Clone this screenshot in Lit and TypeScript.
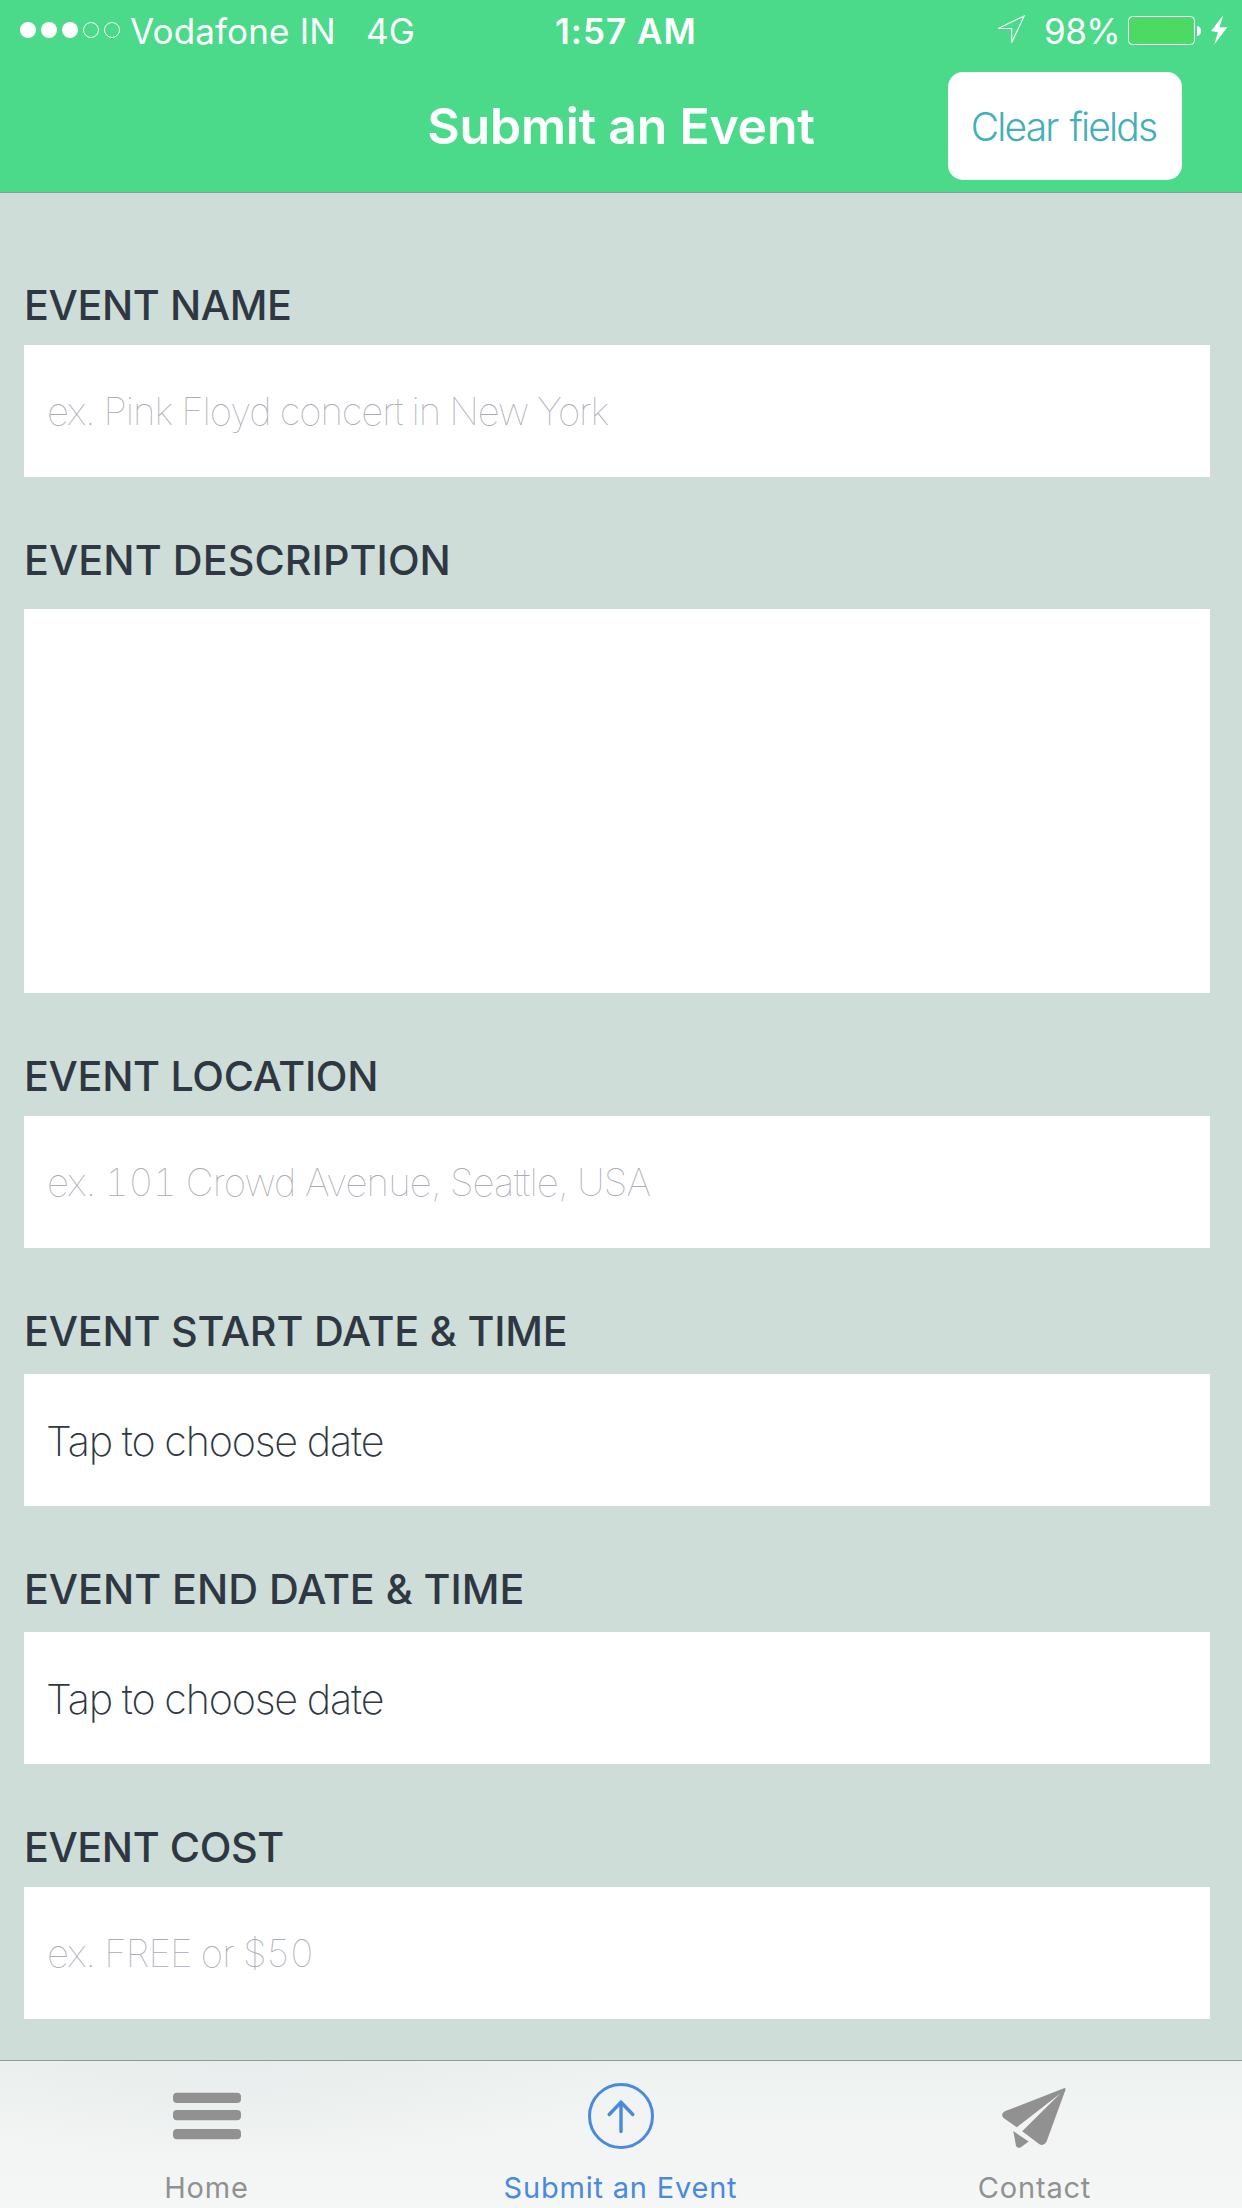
import { LitElement, html, css, svg } from "lit";
import { customElement, property } from "lit/decorators.js";
import { classMap } from "lit/directives/class-map.js";
import { styleMap } from "lit/directives/style-map.js";

type FieldKind = "text" | "area" | "date";

interface Field {
  label: string;
  kind: FieldKind;
  value: string;
  /** Letter spacing in pixels for the label and for the value. */
  labelTracking: number;
  valueTracking: number;
}

interface Tab {
  label: string;
  icon: "menu" | "submit" | "plane";
  active: boolean;
}

const FIELDS: Field[] = [
  { label: "EVENT NAME", kind: "text", value: "ex. Pink Floyd concert in New York", labelTracking: -0.38, valueTracking: -1.12 },
  { label: "EVENT DESCRIPTION", kind: "area", value: "", labelTracking: 0.08, valueTracking: 0 },
  { label: "EVENT LOCATION", kind: "text", value: "ex. 101 Crowd Avenue, Seattle, USA", labelTracking: -0.3, valueTracking: -0.88 },
  { label: "EVENT START DATE & TIME", kind: "date", value: "Tap to choose date", labelTracking: -0.2, valueTracking: -1.2 },
  { label: "EVENT END DATE & TIME", kind: "date", value: "Tap to choose date", labelTracking: -0.03, valueTracking: -1.2 },
  { label: "EVENT COST", kind: "text", value: "ex. FREE or $50", labelTracking: -0.42, valueTracking: -0.97 },
];

const TABS: Tab[] = [
  { label: "Home", icon: "menu", active: false },
  { label: "Submit an Event", icon: "submit", active: true },
  { label: "Contact", icon: "plane", active: false },
];

@customElement("status-bar")
class StatusBar extends LitElement {
  static styles = css`
    :host {
      display: grid;
      grid-template-columns: 110px 236px 189px 441px 48px 84px 1fr;
      align-items: center;
      box-sizing: border-box;
      height: 60px;
      padding: 2px 0 0 20px;
      color: #fff;
      font-size: 35px;
      line-height: 56px;
      white-space: nowrap;
    }
    svg { display: block; margin-top: -2px; }
    .carrier { font-weight: 370; letter-spacing: 0.15px; }
    .time { font-weight: 570; letter-spacing: 1px; }
    .percent { font-weight: 370; letter-spacing: -0.5px; }
  `;
  render() {
    return html`
      <svg width="100" height="60" viewBox="0 0 100 60">
        ${[0, 1, 2, 3, 4].map((i) =>
          i < 3
            ? svg`<circle cx=${8 + i * 21} cy="30" r="8" fill="#fff" />`
            : svg`<circle cx=${8 + i * 21} cy="30" r="7.5" fill="none" stroke="#fff" />`
        )}
      </svg>
      <span class="carrier">Vodafone IN</span>
      <span class="carrier">4G</span>
      <span class="time">1:57 AM</span>
      <svg width="32" height="60" viewBox="0 0 32 60">
        <path d="M28.2 16 L2.2 28.5 H15.7 V42.5 Z" fill="none" stroke="#fff" stroke-width="1.1" />
      </svg>
      <span class="percent">98%</span>
      <svg width="102" height="60" viewBox="0 0 102 60">
        <rect x="0.5" y="16.5" width="66" height="28" rx="4" fill="none" stroke="#fff" />
        <rect x="1.5" y="17.5" width="63.5" height="26" rx="3" fill="#4cd964" />
        <path d="M69 26 C74.4 26 74.4 36 69 36 Z" fill="#fff" />
        <path d="M95.3 15.3 L83 31 L90 32.2 L86.2 44.7 L99.3 27.3 H91.5 Z" fill="#fff" />
      </svg>
    `;
  }
}

@customElement("nav-bar")
class NavBar extends LitElement {
  static styles = css`
    :host {
      display: grid;
      grid-template-columns: 1fr auto 1fr;
      align-items: center;
      height: 132px;
      color: #fff;
    }
    .title {
      margin: 0;
      grid-column: 2;
      font-size: 50px;
      line-height: 60px;
      font-weight: 600;
      letter-spacing: -0.25px;
      white-space: nowrap;
    }
    .clear {
      justify-self: end;
      box-sizing: border-box;
      width: 234px;
      height: 108px;
      margin-right: 60px;
      padding: 2px 3px 0 0;
      border: 0;
      border-radius: 15px;
      background: #fff;
      color: #43b0b8;
      font: 270 39px/50px Inter, "Liberation Sans", sans-serif;
      letter-spacing: -1.85px;
      word-spacing: 3px;
      white-space: nowrap;
    }
  `;
  render() {
    return html`
      <h1 class="title">Submit an Event</h1>
      <button class="clear">Clear fields</button>
    `;
  }
}

@customElement("form-field")
class FormField extends LitElement {
  @property({ attribute: false }) field!: Field;

  static styles = css`
    :host { display: block; }
    .label {
      padding-top: 58px;
      font-size: 41.3px;
      line-height: 50px;
      font-weight: 540;
      color: #2f3842;
      white-space: nowrap;
    }
    .box {
      display: flex;
      align-items: center;
      box-sizing: border-box;
      height: 132px;
      margin-top: 15px;
      padding-left: 23px;
      background: #fff;
      font-size: 38.5px;
      line-height: 50px;
      font-weight: 130;
      font-variant-numeric: tabular-nums;
      color: #acacb5;
      white-space: nowrap;
    }
    .area { height: 384px; margin-top: 24px; }
    .date {
      margin-top: 18px;
      padding: 2px 0 0 22px;
      font-size: 41.3px;
      font-weight: 200;
      color: #2f3842;
    }
  `;
  render() {
    const { label, kind, value, labelTracking, valueTracking } = this.field;
    return html`
      <div class="label" style=${styleMap({ letterSpacing: `${labelTracking}px` })}>${label}</div>
      <div class=${classMap({ box: true, area: kind === "area", date: kind === "date" })}>
        ${value ? html`<span style=${styleMap({ letterSpacing: `${valueTracking}px` })}>${value}</span>` : null}
      </div>
    `;
  }
}

@customElement("tab-bar")
class TabBar extends LitElement {
  static styles = css`
    :host {
      display: grid;
      grid-template-columns: repeat(3, 1fr);
      box-sizing: border-box;
      height: 148px;
      border-top: 1px solid #8d9c96;
      background:
        radial-gradient(ellipse 380px 110px at 240px 0, rgba(229, 233, 234, 0.6), rgba(229, 233, 234, 0)),
        linear-gradient(#edf2f0, #f3f5f4 60%, #f5f7f6);
    }
    .tab {
      display: flex;
      flex-direction: column;
      align-items: center;
      color: #919191;
      font-size: 29px;
      line-height: 36px;
      letter-spacing: 0.8px;
      white-space: nowrap;
    }
    .tab svg { display: block; margin: 17px 0 28px; }
    .tab span { padding-right: 1px; }
    .active { color: #4a89dc; }
  `;
  private icon(name: Tab["icon"]) {
    if (name === "menu") {
      return svg`
        <rect x="6" y="14.7" width="68" height="10.3" rx="4" fill="currentColor" />
        <rect x="6" y="32" width="68" height="10.3" rx="4" fill="currentColor" />
        <rect x="6" y="51" width="68" height="10.3" rx="4" fill="currentColor" />`;
    }
    if (name === "submit") {
      return svg`
        <g fill="none" stroke="currentColor" stroke-width="3">
          <circle cx="40" cy="38" r="31.5" />
          <path d="M40 53.5 V24 M28.2 36.5 L40 24.3 L51.8 36.5" stroke-width="3.4" stroke-linecap="round" stroke-linejoin="round" />
        </g>`;
    }
    return svg`
      <g fill="currentColor" transform="translate(-1.4 0)">
        <path d="M71 10 Q72.3 10 71.8 12 L52.8 64 Q50 68.5 45.5 66 L28.6 53.2 L67 15.2 L23.2 49.2 L10 39.9 Q6.4 36 11.2 33.3 Z" />
        <path d="M19.6 53 L35 63.6 L27.4 69.2 Q23.6 71 22.4 67.6 Z" />
      </g>`;
  }
  render() {
    return html`${TABS.map(
      (t) => html`
        <div class=${classMap({ tab: true, active: t.active })}>
          <svg width="80" height="64" viewBox="0 0 80 64" overflow="visible">${this.icon(t.icon)}</svg>
          <span>${t.label}</span>
        </div>
      `
    )}`;
  }
}

@customElement("app-root")
class AppRoot extends LitElement {
  static styles = css`
    :host {
      display: flex;
      flex-direction: column;
      width: 1242px;
      height: 2208px;
      overflow: hidden;
      background: #ceddd8;
      font-family: Inter, "Liberation Sans", sans-serif;
    }
    .header {
      flex: none;
      background: #4ada8a;
      border-bottom: 1px solid #8f9d97;
    }
    .form {
      flex: 1;
      min-height: 0;
      padding: 29px 32px 0 24px;
    }
    tab-bar { flex: none; }
  `;
  render() {
    return html`
      <header class="header">
        <status-bar></status-bar>
        <nav-bar></nav-bar>
      </header>
      <main class="form">
        ${FIELDS.map((f) => html`<form-field .field=${f}></form-field>`)}
      </main>
      <tab-bar></tab-bar>
    `;
  }
}
